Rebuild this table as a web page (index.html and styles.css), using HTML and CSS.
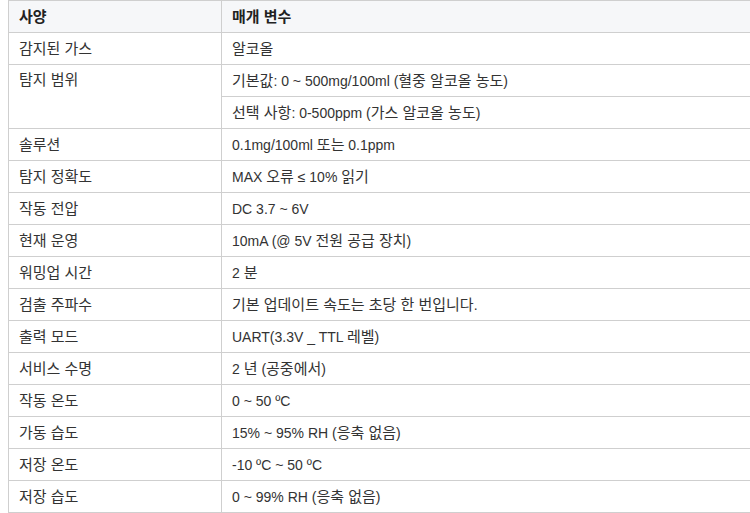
FILE: index.html
```html
<!DOCTYPE html>
<html lang="ko">
<head>
<meta charset="utf-8">
<link rel="stylesheet" href="styles.css">
</head>
<body>
<table class="spec">
  <colgroup><col class="c1"><col class="c2"></colgroup>
  <thead>
    <tr><th><span class="ko">사양</span></th><th><span class="ko">매개 변수</span></th></tr>
  </thead>
  <tbody>
    <tr><td><span class="ko">감지된 가스</span></td><td><span class="ko">알코올</span></td></tr>
    <tr><td rowspan="2" class="top"><span class="ko">탐지 범위</span></td><td><span class="ko">기본값</span>: 0 ~ 500mg/100ml (<span class="ko">혈중 알코올 농도</span>)</td></tr>
    <tr><td><span class="ko">선택 사항</span>: 0-500ppm (<span class="ko">가스 알코올 농도</span>)</td></tr>
    <tr><td><span class="ko">솔루션</span></td><td>0.1mg/100ml <span class="ko">또는</span> 0.1ppm</td></tr>
    <tr><td><span class="ko">탐지 정확도</span></td><td>MAX <span class="ko">오류</span> ≤ 10% <span class="ko">읽기</span></td></tr>
    <tr><td><span class="ko">작동 전압</span></td><td>DC 3.7 ~ 6V</td></tr>
    <tr><td><span class="ko">현재 운영</span></td><td>10mA (@ 5V <span class="ko">전원 공급 장치</span>)</td></tr>
    <tr><td><span class="ko">워밍업 시간</span></td><td>2 <span class="ko">분</span></td></tr>
    <tr><td><span class="ko">검출 주파수</span></td><td><span class="ko">기본 업데이트 속도는 초당 한 번입니다</span>.</td></tr>
    <tr><td><span class="ko">출력 모드</span></td><td>UART(3.3V _ TTL <span class="ko">레벨</span>)</td></tr>
    <tr><td><span class="ko">서비스 수명</span></td><td>2 <span class="ko">년</span> (<span class="ko">공중에서</span>)</td></tr>
    <tr><td><span class="ko">작동 온도</span></td><td>0 ~ 50 ºC</td></tr>
    <tr><td><span class="ko">가동 습도</span></td><td>15% ~ 95% RH (<span class="ko">응축 없음</span>)</td></tr>
    <tr><td><span class="ko">저장 온도</span></td><td>-10 ºC ~ 50 ºC</td></tr>
    <tr><td><span class="ko">저장 습도</span></td><td>0 ~ 99% RH (<span class="ko">응축 없음</span>)</td></tr>
  </tbody>
</table>
</body>
</html>
```

FILE: styles.css
```css
html, body {
  margin: 0;
  background: #fff;
  overflow: hidden;
}
body {
  padding-left: 8px;
  font-family: "Liberation Sans", Arial, "Noto Sans CJK KR", sans-serif;
  font-size: 14px;
  color: #333;
}
.spec {
  border-collapse: collapse;
  width: 780px;
  table-layout: fixed;
}
.spec .c1 { width: 213px; }
.spec th,
.spec td {
  border: 1px solid #cfcfcf;
  padding: 0 10px;
  height: 31px;
  box-sizing: border-box;
  text-align: left;
  vertical-align: middle;
  line-height: 20px;
  white-space: nowrap;
}
.spec tr { height: 32px; }
.spec th {
  background: #f6f7f9;
  font-weight: bold;
  color: #222;
}
.spec td.top {
  vertical-align: top;
  padding-top: 5px;
}
.ko {
  font-size: 15px;
  line-height: 20px;
}
```
